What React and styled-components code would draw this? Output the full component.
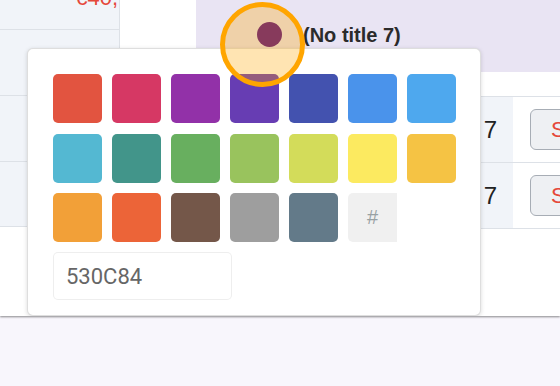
import styled, { createGlobalStyle } from 'styled-components';

const GlobalStyle = createGlobalStyle`
  body {
    margin: 0;
    background: #f8f6fc;
    font-family: 'Liberation Sans', Arial, sans-serif;
  }
  #root {
    min-height: 100vh;
  }
`;

const swatches = [
  '#E25440', '#D63864', '#9231A8', '#673DB3', '#4352AF', '#4A93EB', '#4EA8EE',
  '#54B8D2', '#42958A', '#68AF5F', '#99C35D', '#D3DC5A', '#FCEA60', '#F5C344',
  '#F2A038', '#EC6438', '#745749', '#9E9E9E', '#637A89',
];

const App = () => {
  return (
    <Page>
      <GlobalStyle />
      <Card>
        <LeftCol>
          <LeftCell $height={30}>
            <Price>€40,</Price>
          </LeftCell>
          <LeftCell $height={66} />
          <LeftCell $height={66} />
          <LeftCell $height={65} />
        </LeftCol>
        <Main>
          <HeaderRow>
            <HeaderGap />
            <HeaderCell>
              <Dot />
              <Title>(No title 7)</Title>
            </HeaderCell>
          </HeaderRow>
          <Spacer />
          {[0, 1].map((i) => (
            <Row key={i}>
              <Filler />
              <NumberCell>7</NumberCell>
              <ActionCell>
                <ActionButton>S</ActionButton>
              </ActionCell>
            </Row>
          ))}
        </Main>

        <Picker>
          <SwatchGrid>
            {swatches.map((c) => (
              <Swatch key={c} $color={c} />
            ))}
            <Hash>#</Hash>
          </SwatchGrid>
          <HexInput value="530C84" readOnly />
        </Picker>

        <Highlight />
      </Card>
    </Page>
  );
};

const Page = styled.div`
  min-height: 100vh;
  background: #f8f6fc;
`;

const Card = styled.div`
  position: relative;
  display: flex;
  height: 316px;
  background: #fff;
  overflow: hidden;
  box-shadow: 0 1px 2px rgba(0, 0, 0, 0.45);
`;

const LeftCol = styled.div`
  width: 119px;
  border-right: 1px solid #dde1e7;
  display: flex;
  flex-direction: column;
`;

const LeftCell = styled.div`
  height: ${(p) => p.$height}px;
  background: #f1f4f9;
  border-bottom: 1px solid #dde1e7;
  display: flex;
  justify-content: flex-end;
  align-items: flex-start;
  box-sizing: border-box;
  padding-right: 1px;
`;

const Price = styled.span`
  color: #e5483a;
  font-size: 22px;
  line-height: 22px;
  margin-top: -13px;
`;

const Main = styled.div`
  flex: 1;
  display: flex;
  flex-direction: column;
`;

const HeaderRow = styled.div`
  height: 72px;
  display: flex;
`;

const HeaderGap = styled.div`
  width: 76px;
`;

const HeaderCell = styled.div`
  flex: 1;
  background: #e9e4f3;
  display: flex;
  align-items: flex-start;
  padding: 22px 0 0 61px;
  gap: 21px;
`;

const Dot = styled.span`
  width: 25px;
  height: 25px;
  border-radius: 50%;
  background: #530c84;
  flex-shrink: 0;
`;

const Title = styled.span`
  font-size: 20px;
  font-weight: bold;
  color: #2b2b2b;
  line-height: 26px;
`;

const Spacer = styled.div`
  height: 24px;
  border-bottom: 1px solid #dde1e7;
`;

const Row = styled.div`
  height: 65px;
  display: flex;
  border-bottom: 1px solid #dde1e7;
`;

const Filler = styled.div`
  flex: 1;
`;

const NumberCell = styled.div`
  width: 80px;
  background: #f1f4f9;
  display: flex;
  align-items: center;
  justify-content: flex-end;
  padding-right: 16px;
  box-sizing: border-box;
  font-size: 24px;
  color: #222;
`;

const ActionCell = styled.div`
  width: 47px;
  box-sizing: border-box;
  padding-left: 17px;
  display: flex;
  align-items: center;
`;

const ActionButton = styled.button`
  height: 41px;
  padding: 0 20px;
  border: 1px solid #a7adb5;
  border-radius: 6px;
  background: #eef0f3;
  color: #e5483a;
  font-family: inherit;
  font-size: 22px;
  white-space: nowrap;
  text-align: left;
  min-width: 80px;
`;

const Picker = styled.div`
  position: absolute;
  left: 27px;
  top: 48px;
  width: 454px;
  height: 268px;
  box-sizing: border-box;
  padding: 25px 25px 15px 25px;
  background: #fff;
  border: 1px solid rgba(0, 0, 0, 0.13);
  border-radius: 6px;
  box-shadow: 0 1px 4px rgba(0, 0, 0, 0.15);
  display: flex;
  flex-direction: column;
  gap: 10px;
`;

const SwatchGrid = styled.div`
  display: grid;
  grid-template-columns: repeat(7, 49px);
  grid-auto-rows: 49px;
  column-gap: 10px;
  row-gap: 10.5px;
`;

const Swatch = styled.div`
  background: ${(p) => p.$color};
  border-radius: 5px;
`;

const Hash = styled.div`
  background: #f0f0f0;
  border-radius: 5px 0 0 5px;
  color: #98a1a4;
  font-size: 20px;
  display: flex;
  align-items: center;
  justify-content: center;
`;

const HexInput = styled.input`
  width: 179px;
  height: 48px;
  box-sizing: border-box;
  border: 0;
  border-radius: 5px;
  box-shadow: inset 0 0 0 1px #eeeeee;
  padding-left: 13px;
  font-family: 'Roboto', 'Liberation Sans', sans-serif;
  font-size: 22px;
  color: #666;
  outline: none;
`;

const Highlight = styled.div`
  position: absolute;
  left: 220px;
  top: 2px;
  width: 85px;
  height: 85px;
  box-sizing: border-box;
  border-radius: 50%;
  border: 5px solid #ffa500;
  background: rgba(255, 165, 0, 0.3);
  pointer-events: none;
`;

export default App;
